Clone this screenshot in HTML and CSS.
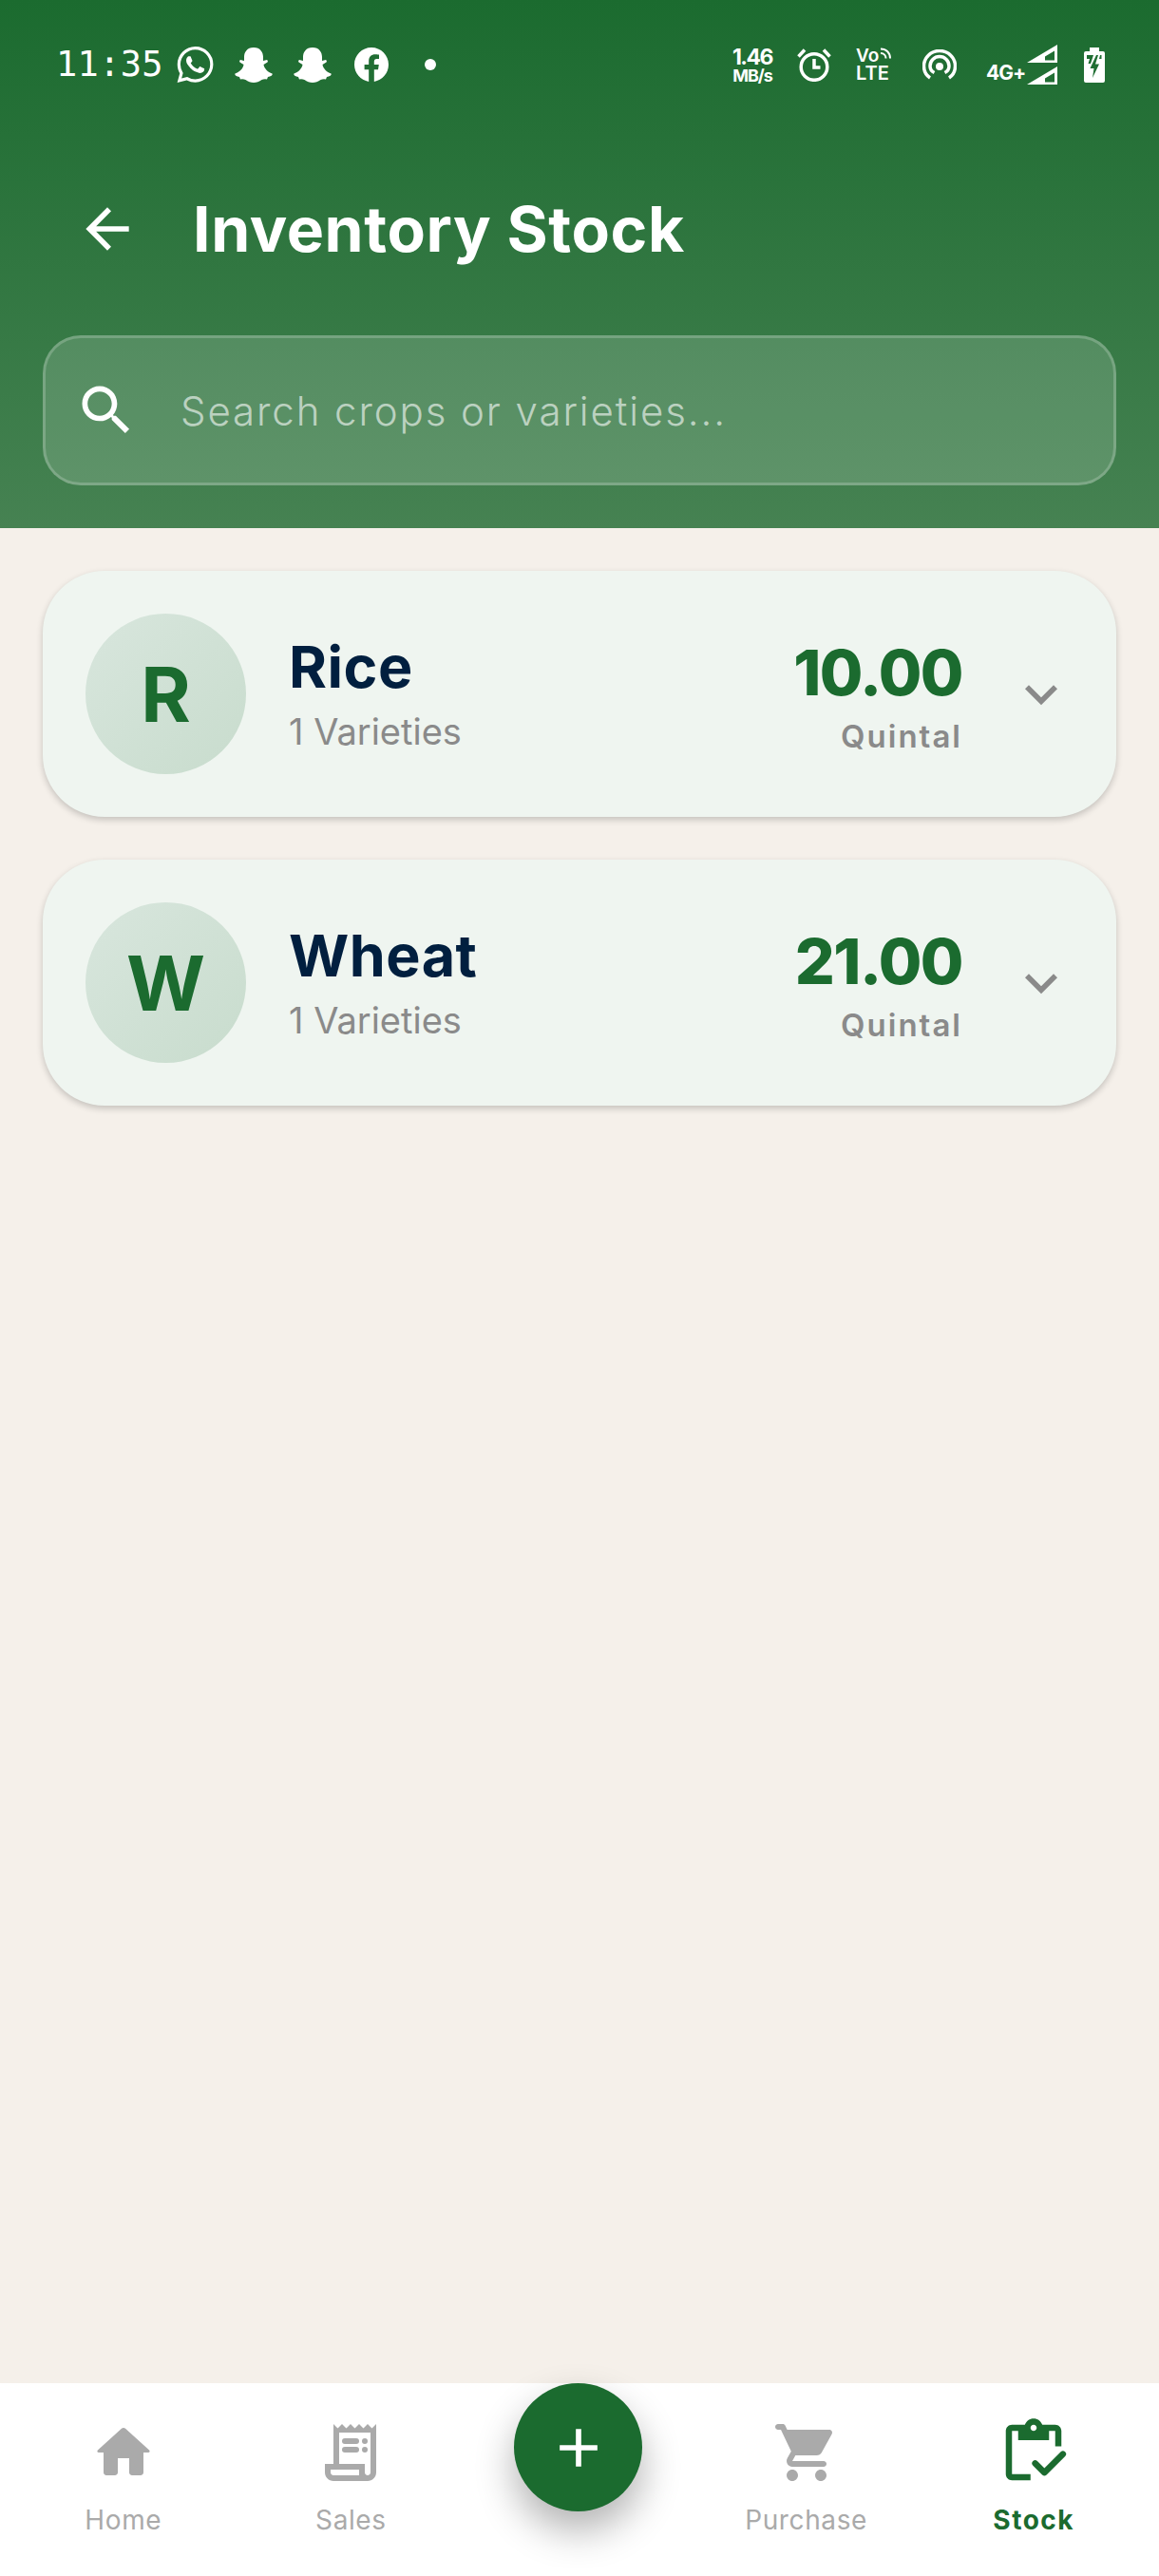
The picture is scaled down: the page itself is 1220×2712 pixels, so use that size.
FILE: index.html
```html
<!DOCTYPE html>
<html lang="en">
<head>
  <meta charset="UTF-8">
  <meta name="viewport" content="width=device-width, initial-scale=1.0">
  <title>Inventory Stock</title>
  <link rel="stylesheet" href="styles.css">
</head>
<body>
  <header class="header">
    <div class="status-bar">
      <div class="status-left">
        <span class="clock">11:35</span>
        <svg class="st-whatsapp" viewBox="0 0 24 24"><path d="M17.472 14.382c-.297-.149-1.758-.867-2.03-.967-.273-.099-.471-.148-.67.15-.197.297-.767.966-.94 1.164-.173.199-.347.223-.644.075-.297-.15-1.255-.463-2.39-1.475-.883-.788-1.48-1.761-1.653-2.059-.173-.297-.018-.458.13-.606.134-.133.298-.347.446-.52.149-.174.198-.298.298-.497.099-.198.05-.371-.025-.52-.075-.149-.669-1.612-.916-2.207-.242-.579-.487-.5-.669-.51-.173-.008-.371-.01-.57-.01-.198 0-.52.074-.792.372-.272.297-1.04 1.016-1.04 2.479 0 1.462 1.065 2.875 1.213 3.074.149.198 2.096 3.2 5.077 4.487.709.306 1.262.489 1.694.625.712.227 1.36.195 1.871.118.571-.085 1.758-.719 2.006-1.413.248-.694.248-1.289.173-1.413-.074-.124-.272-.198-.57-.347m-5.421 7.403h-.004a9.87 9.87 0 01-5.031-1.378l-.361-.214-3.741.982.998-3.648-.235-.374a9.86 9.86 0 01-1.51-5.26c.001-5.45 4.436-9.884 9.888-9.884 2.64 0 5.122 1.03 6.988 2.898a9.825 9.825 0 012.893 6.994c-.003 5.45-4.437 9.884-9.885 9.884m8.413-18.297A11.815 11.815 0 0012.05 0C5.495 0 .16 5.335.157 11.892c0 2.096.547 4.142 1.588 5.945L.057 24l6.305-1.654a11.882 11.882 0 005.683 1.448h.005c6.554 0 11.89-5.335 11.893-11.893a11.821 11.821 0 00-3.48-8.413Z"/></svg>
        <svg class="st-snap" viewBox="0 0 40 37"><path d="M20 0C27 0 30 5 30 10L30 14L34 13Q35.5 14 34.5 15.5L30.5 18C31 22 35 26 39.5 27.5Q40.5 29 37 30.5L35 31L34 33.5Q31 33 28.5 34C26 36 23 37 20 37C17 37 14 36 11.5 34Q9 33 6 33.5L5 31L3 30.5Q-.5 29 .5 27.5C5 26 9 22 9.5 18L5.5 15.5Q4.5 14 6 13L10 14L10 10C10 5 13 0 20 0Z"/></svg>
        <svg class="st-snap" viewBox="0 0 40 37"><path d="M20 0C27 0 30 5 30 10L30 14L34 13Q35.5 14 34.5 15.5L30.5 18C31 22 35 26 39.5 27.5Q40.5 29 37 30.5L35 31L34 33.5Q31 33 28.5 34C26 36 23 37 20 37C17 37 14 36 11.5 34Q9 33 6 33.5L5 31L3 30.5Q-.5 29 .5 27.5C5 26 9 22 9.5 18L5.5 15.5Q4.5 14 6 13L10 14L10 10C10 5 13 0 20 0Z"/></svg>
        <svg class="st-fb" viewBox="0 0 24 24"><path d="M24 12.073c0-6.627-5.373-12-12-12s-12 5.373-12 12c0 5.99 4.388 10.954 10.125 11.854v-8.385H7.078v-3.47h3.047V9.43c0-3.007 1.792-4.669 4.533-4.669 1.312 0 2.686.235 2.686.235v2.953H15.83c-1.491 0-1.956.925-1.956 1.874v2.25h3.328l-.532 3.47h-2.796v8.385C19.612 23.027 24 18.062 24 12.073z"/></svg>
        <span class="st-dot"></span>
      </div>
      <div class="status-right">
        <div class="st-speed"><span class="speed-num">1.46</span><span class="speed-unit">MB/s</span></div>
        <svg class="st-alarm" viewBox="0 0 36 36"><circle cx="18" cy="20.5" r="13.8" class="line"/><path class="line" d="M18 12v9h6.5M1.5 9.5 8 2.5M34.500 9.500 28 2.500"/></svg>
        <div class="st-volte">
          <div class="vo-row"><span>Vo</span><svg viewBox="0 0 14 14"><path class="line thin" d="M1 2.500c6 0 10 4 10 10M1 7c3.500 0 5.500 2.500 5.500 5.500"/></svg></div>
          <span class="lte">LTE</span>
        </div>
        <svg class="st-hotspot" viewBox="0 0 36 32"><path class="line" d="M8 30C3.500 27 1.500 22 1.500 17.500a16.500 16 0 0 1 33 0C34.500 22 32.500 27 28 30M12.500 24.500C9.500 23 8 20.500 8 17.500a10 10 0 0 1 20 0c0 3-1.500 5.500-4.500 7"/><circle cx="18" cy="18" r="4"/></svg>
        <span class="st-net">4G+</span>
        <div class="st-signal">
          <svg viewBox="0 0 32 19"><path fill-rule="evenodd" d="M0 19 32 0V19ZM19 16.500H29V6.500L19 12.500Z"/></svg>
          <svg viewBox="0 0 32 19"><path fill-rule="evenodd" d="M0 19 32 0V19ZM19 16.500H29V6.500L19 12.500Z"/></svg>
        </div>
        <svg class="st-battery" viewBox="0 0 22 37"><path fill-rule="evenodd" d="M6 0H16V4H20Q22 4 22 6V35Q22 37 20 37H2Q0 37 0 35V6Q0 4 2 4H6ZM3 8V12H6L4.500 17H7L10 8ZM13 8 6.500 22H10.500L9 32 16 17.500H12L15 8ZM17 8 16 12H18.500V8Z"/></svg>
      </div>
    </div>
    <div class="toolbar">
      <svg class="icon-68" viewBox="0 0 24 24"><path d="M20 11H7.830l5.590-5.590L12 4l-8 8 8 8 1.410-1.410L7.830 13H20v-2z"/></svg>
      <h1 class="title">Inventory Stock</h1>
    </div>
    <div class="search">
      <svg class="icon-68" viewBox="0 0 24 24"><path d="M15.500 14h-.79l-.28-.27C15.410 12.590 16 11.110 16 9.500 16 5.910 13.090 3 9.500 3S3 5.910 3 9.500 5.910 16 9.500 16c1.610 0 3.090-.59 4.230-1.570l.27.28v.79l5 4.990L20.490 19l-4.990-5zm-6 0C7.010 14 5 11.990 5 9.500S7.010 5 9.500 5 14 7.010 14 9.500 11.990 14 9.500 14z"/></svg>
      <input class="search-input" type="text" placeholder="Search crops or varieties...">
    </div>
  </header>

  <main class="list">
    <div class="card">
      <div class="avatar">R</div>
      <div class="crop-info">
        <div class="crop-name">Rice</div>
        <div class="crop-sub">1 Varieties</div>
      </div>
      <div class="crop-qty">
        <div class="qty-num">10.00</div>
        <div class="qty-unit">Quintal</div>
      </div>
      <svg class="icon-68 chevron" viewBox="0 0 24 24"><path d="M16.590 8.590 12 13.170 7.410 8.590 6 10l6 6 6-6z"/></svg>
    </div>
    <div class="card">
      <div class="avatar">W</div>
      <div class="crop-info">
        <div class="crop-name">Wheat</div>
        <div class="crop-sub">1 Varieties</div>
      </div>
      <div class="crop-qty">
        <div class="qty-num">21.00</div>
        <div class="qty-unit">Quintal</div>
      </div>
      <svg class="icon-68 chevron" viewBox="0 0 24 24"><path d="M16.590 8.590 12 13.170 7.410 8.590 6 10l6 6 6-6z"/></svg>
    </div>
  </main>

  <nav class="nav">
    <div class="nav-item">
      <svg class="nav-icon" viewBox="0 0 24 24"><path d="M10 19v-5h4v5c0 .55.45 1 1 1h3c.55 0 1-.45 1-1v-7h1.700c.46 0 .68-.57.33-.87L12.670 3.600c-.38-.34-.96-.34-1.340 0l-8.360 7.530c-.34.3-.13.87.33.87H5v7c0 .55.45 1 1 1h3c.55 0 1-.45 1-1z"/></svg>
      <span>Home</span>
    </div>
    <div class="nav-item">
      <svg class="nav-icon" viewBox="0 0 24 24"><path d="M19.500 3.500 18 2l-1.500 1.500L15 2l-1.500 1.500L12 2l-1.500 1.500L9 2 7.500 3.500 6 2v14H3v3c0 1.660 1.340 3 3 3h12c1.660 0 3-1.340 3-3V2l-1.500 1.500zM15 20H6c-.55 0-1-.45-1-1v-1h10v2zm4-1c0 .55-.45 1-1 1s-1-.45-1-1v-3H8V5h11v14z"/><rect x="9" y="7" width="6" height="2" rx="1"/><circle cx="17" cy="8" r="1"/><rect x="9" y="10" width="6" height="2" rx="1"/><circle cx="17" cy="11" r="1"/></svg>
      <span>Sales</span>
    </div>
    <div class="nav-fab">
      <button class="fab"><svg class="icon-68" viewBox="0 0 24 24"><path d="M19 13h-6v6h-2v-6H5v-2h6V5h2v6h6v2z"/></svg></button>
    </div>
    <div class="nav-item">
      <svg class="nav-icon" viewBox="0 0 24 24"><path d="M7 18c-1.100 0-1.990.9-1.990 2S5.900 22 7 22s2-.9 2-2-.9-2-2-2zM1 3c0 .55.45 1 1 1h1l3.600 7.590-1.350 2.440C4.520 15.370 5.480 17 7 17h11c.55 0 1-.45 1-1s-.45-1-1-1H7l1.100-2h7.450c.75 0 1.410-.41 1.750-1.030l3.580-6.490c.37-.66-.11-1.480-.87-1.480H5.210l-.67-1.430c-.16-.35-.52-.57-.9-.57H2c-.55 0-1 .45-1 1zm16 15c-1.100 0-1.990.9-1.990 2s.89 2 1.990 2 2-.9 2-2-.9-2-2-2z"/></svg>
      <span>Purchase</span>
    </div>
    <div class="nav-item active">
      <svg class="nav-icon" viewBox="0 0 24 24"><path d="M5 5h2v3h10V5h2v5h2V5c0-1.100-.9-2-2-2h-4.180C14.400 1.840 13.300 1 12 1S9.600 1.840 9.180 3H5c-1.100 0-2 .9-2 2v14c0 1.100.9 2 2 2h6v-2H5V5zm7-2c.55 0 1 .45 1 1s-.45 1-1 1-1-.45-1-1 .45-1 1-1z"/><path class="check" d="M12.500 15.500 15.500 18.500 21.500 12.500"/></svg>
      <span>Stock</span>
    </div>
  </nav>
</body>
</html>
```

FILE: styles.css
```css
* { box-sizing: border-box; }

body {
  margin: 0;
  height: 2712px;
  display: flex;
  flex-direction: column;
  background: #f5f0ea;
  font-family: Inter, "Open Sans", sans-serif;
  overflow: hidden;
}

svg { display: block; fill: currentColor; flex: none; }
.icon-68 { width: 68px; height: 68px; }
.line { fill: none; stroke: #fff; stroke-width: 3.5; }
.line.thin { stroke-width: 2; }

/* header */
.header {
  height: 556px;
  flex: none;
  color: #fff;
  background: linear-gradient(180deg, #1b6b2f 0%, #468252 100%);
}

.status-bar {
  height: 136px;
  padding: 0 57px 0 59px;
  display: flex;
  justify-content: space-between;
  align-items: center;
}
.status-left, .status-right { display: flex; align-items: center; }

.clock {
  width: 112px;
  font-family: "DejaVu Sans Mono", monospace;
  font-size: 37px;
  line-height: 40px;
  letter-spacing: 0.3px;
}
.st-whatsapp { width: 39px; height: 38px; margin-left: 15px; }
.st-snap { width: 40px; height: 37px; margin-left: 22px; }
.st-fb { width: 36px; height: 36px; margin-left: 24px; }
.st-dot { width: 12px; height: 12px; margin-left: 38px; border-radius: 50%; background: #fff; }

.st-speed { width: 42px; display: flex; flex-direction: column; align-items: center; font-weight: 700; }
.speed-num { font-size: 23px; line-height: 22px; letter-spacing: -1.5px; }
.speed-unit { font-size: 18px; line-height: 17px; letter-spacing: -1px; }
.st-alarm { width: 36px; height: 36px; margin-left: 26px; }
.st-volte { width: 38px; margin-left: 26px; font-weight: 600; }
.vo-row { display: flex; font-size: 19px; line-height: 19px; }
.vo-row svg { width: 14px; height: 14px; margin-left: 1px; }
.lte { display: block; font-size: 20px; line-height: 19px; }
.st-hotspot { width: 36px; height: 32px; margin-left: 32px; }
.st-net {
  width: 39px;
  align-self: flex-end;
  margin-left: 31px;
  font-size: 21px;
  line-height: 24px;
  font-weight: 700;
  letter-spacing: -1px;
  white-space: nowrap;
}
.st-signal { width: 32px; margin-left: 4px; display: flex; flex-direction: column; gap: 4px; }
.st-signal svg { width: 32px; height: 19px; }
.st-battery { width: 22px; height: 37px; margin-left: 28px; }

.toolbar {
  height: 210px;
  padding-left: 79px;
  display: flex;
  align-items: center;
}
.title {
  margin: 0 0 0 56px;
  font-size: 66px;
  line-height: 76px;
  font-weight: 700;
  letter-spacing: 0.6px;
}

.search {
  height: 158px;
  margin: 7px 45px 0;
  padding-left: 30px;
  display: flex;
  align-items: center;
  background: rgba(255, 255, 255, 0.15);
  border: 3px solid rgba(255, 255, 255, 0.2);
  border-radius: 40px;
}
.search-input {
  flex: 1;
  margin-left: 44px;
  padding: 0;
  border: none;
  outline: none;
  background: none;
  color: #fff;
  font-family: inherit;
  font-size: 42px;
  font-weight: 300;
  letter-spacing: 1.9px;
}
.search-input::placeholder { color: rgba(255, 255, 255, 0.6); opacity: 1; }

/* crop cards */
.list {
  flex: 1;
  padding: 45px;
  display: flex;
  flex-direction: column;
  gap: 45px;
}
.card {
  height: 259px;
  padding: 0 45px;
  display: flex;
  align-items: center;
  background: #eff5f0;
  border-radius: 65px;
  box-shadow: 0 3px 7px rgba(0, 0, 0, 0.2);
}
.avatar {
  width: 169px;
  height: 169px;
  flex: none;
  display: flex;
  align-items: center;
  justify-content: center;
  border-radius: 50%;
  background: linear-gradient(135deg, #d8e6dd, #c8dccd);
  color: #1b6b2f;
  font-size: 80px;
  font-weight: 700;
}
.crop-info { flex: 1; margin: 0 0 3px 45px; }
.crop-name {
  margin-bottom: 9px;
  color: #011f3f;
  font-size: 61px;
  line-height: 72px;
  font-weight: 700;
  letter-spacing: 0.5px;
}
.crop-sub {
  color: #8a8a8a;
  font-size: 38px;
  line-height: 46px;
}
.crop-qty { text-align: right; margin: 3px 49px 0 0; }
.qty-num {
  color: #1b6b2f;
  font-size: 66px;
  line-height: 76px;
  font-weight: 800;
  letter-spacing: -1.5px;
}
.qty-unit {
  margin-top: 9px;
  color: #8a8a8a;
  font-size: 33px;
  line-height: 40px;
  font-weight: 600;
  letter-spacing: 2px;
}
.chevron { color: #8a8a8a; }

/* bottom nav */
.nav {
  height: 203px;
  flex: none;
  padding: 0 12px 0 10px;
  display: grid;
  grid-template-columns: repeat(5, 1fr);
  background: #fff;
}
.nav-item {
  padding-top: 34px;
  display: flex;
  flex-direction: column;
  align-items: center;
  color: #aaa;
  font-size: 28px;
  line-height: 32px;
  letter-spacing: 0.6px;
}
.nav-icon { width: 72px; height: 72px; margin: 3px 0 19px; }
.nav-item.active { color: #1b6b2f; font-weight: 700; letter-spacing: 1.5px; }
.nav-item.active .nav-icon { width: 78px; height: 78px; margin: 0 0 16px; }
.check { fill: none; stroke: currentColor; stroke-width: 2; stroke-linecap: round; stroke-linejoin: round; }

.nav-fab { display: flex; justify-content: center; }
.fab {
  width: 135px;
  height: 135px;
  padding: 0;
  display: flex;
  align-items: center;
  justify-content: center;
  border: none;
  border-radius: 50%;
  background: #1b6b2f;
  color: #fff;
  box-shadow: 0 20px 40px rgba(0, 0, 0, 0.3);
}
```
